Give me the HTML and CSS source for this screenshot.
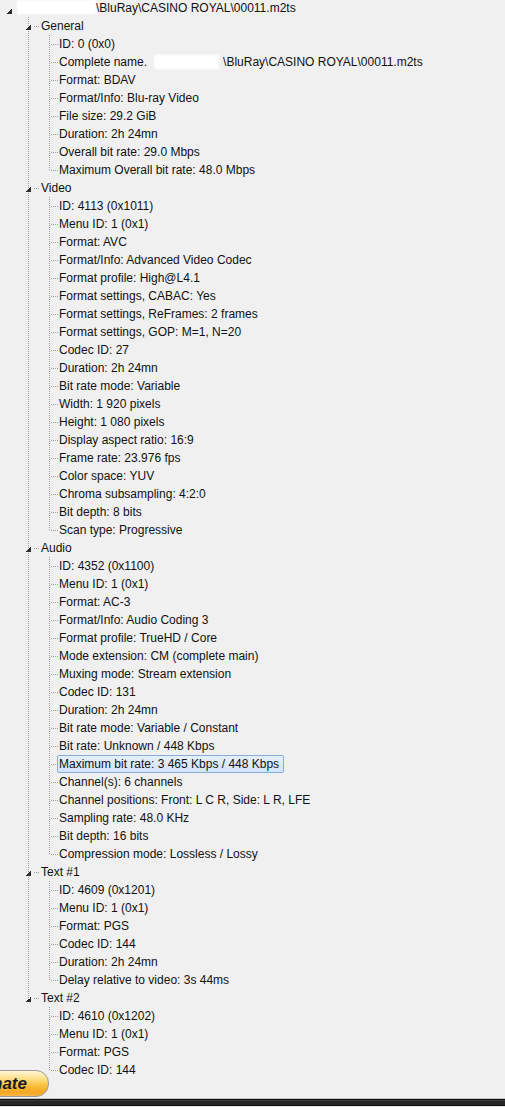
FILE: index.html
```html
<!DOCTYPE html>
<html>
<head>
<meta charset="utf-8">
<link rel="stylesheet" href="styles.css">
</head>
<body>
<div class="page">
  <div class="tree">
    <div class="row root-row"><span class="exp"></span><span class="label"><span class="redact r-root"></span>\BluRay\CASINO ROYAL\00011.m2ts</span></div>
    <ul class="groups">
      <li class="group">
        <div class="row group-row"><span class="exp"></span><span class="label">General</span></div>
        <ul class="items">
          <li class="item"><span class="label">ID: 0 (0x0)</span></li>
          <li class="item"><span class="label">Complete name.<span class="redact r-name"></span>\BluRay\CASINO ROYAL\00011.m2ts</span></li>
          <li class="item"><span class="label">Format: BDAV</span></li>
          <li class="item"><span class="label">Format/Info: Blu-ray Video</span></li>
          <li class="item"><span class="label">File size: 29.2 GiB</span></li>
          <li class="item"><span class="label">Duration: 2h 24mn</span></li>
          <li class="item"><span class="label">Overall bit rate: 29.0 Mbps</span></li>
          <li class="item"><span class="label">Maximum Overall bit rate: 48.0 Mbps</span></li>
        </ul>
      </li>
      <li class="group">
        <div class="row group-row"><span class="exp"></span><span class="label">Video</span></div>
        <ul class="items">
          <li class="item"><span class="label">ID: 4113 (0x1011)</span></li>
          <li class="item"><span class="label">Menu ID: 1 (0x1)</span></li>
          <li class="item"><span class="label">Format: AVC</span></li>
          <li class="item"><span class="label">Format/Info: Advanced Video Codec</span></li>
          <li class="item"><span class="label">Format profile: High@L4.1</span></li>
          <li class="item"><span class="label">Format settings, CABAC: Yes</span></li>
          <li class="item"><span class="label">Format settings, ReFrames: 2 frames</span></li>
          <li class="item"><span class="label">Format settings, GOP: M=1, N=20</span></li>
          <li class="item"><span class="label">Codec ID: 27</span></li>
          <li class="item"><span class="label">Duration: 2h 24mn</span></li>
          <li class="item"><span class="label">Bit rate mode: Variable</span></li>
          <li class="item"><span class="label">Width: 1 920 pixels</span></li>
          <li class="item"><span class="label">Height: 1 080 pixels</span></li>
          <li class="item"><span class="label">Display aspect ratio: 16:9</span></li>
          <li class="item"><span class="label">Frame rate: 23.976 fps</span></li>
          <li class="item"><span class="label">Color space: YUV</span></li>
          <li class="item"><span class="label">Chroma subsampling: 4:2:0</span></li>
          <li class="item"><span class="label">Bit depth: 8 bits</span></li>
          <li class="item"><span class="label">Scan type: Progressive</span></li>
        </ul>
      </li>
      <li class="group">
        <div class="row group-row"><span class="exp"></span><span class="label">Audio</span></div>
        <ul class="items">
          <li class="item"><span class="label">ID: 4352 (0x1100)</span></li>
          <li class="item"><span class="label">Menu ID: 1 (0x1)</span></li>
          <li class="item"><span class="label">Format: AC-3</span></li>
          <li class="item"><span class="label">Format/Info: Audio Coding 3</span></li>
          <li class="item"><span class="label">Format profile: TrueHD / Core</span></li>
          <li class="item"><span class="label">Mode extension: CM (complete main)</span></li>
          <li class="item"><span class="label">Muxing mode: Stream extension</span></li>
          <li class="item"><span class="label">Codec ID: 131</span></li>
          <li class="item"><span class="label">Duration: 2h 24mn</span></li>
          <li class="item"><span class="label">Bit rate mode: Variable / Constant</span></li>
          <li class="item"><span class="label">Bit rate: Unknown / 448 Kbps</span></li>
          <li class="item"><span class="label selected">Maximum bit rate: 3 465 Kbps / 448 Kbps</span></li>
          <li class="item"><span class="label">Channel(s): 6 channels</span></li>
          <li class="item"><span class="label">Channel positions: Front: L C R, Side: L R, LFE</span></li>
          <li class="item"><span class="label">Sampling rate: 48.0 KHz</span></li>
          <li class="item"><span class="label">Bit depth: 16 bits</span></li>
          <li class="item"><span class="label">Compression mode: Lossless / Lossy</span></li>
        </ul>
      </li>
      <li class="group">
        <div class="row group-row"><span class="exp"></span><span class="label">Text #1</span></div>
        <ul class="items">
          <li class="item"><span class="label">ID: 4609 (0x1201)</span></li>
          <li class="item"><span class="label">Menu ID: 1 (0x1)</span></li>
          <li class="item"><span class="label">Format: PGS</span></li>
          <li class="item"><span class="label">Codec ID: 144</span></li>
          <li class="item"><span class="label">Duration: 2h 24mn</span></li>
          <li class="item"><span class="label">Delay relative to video: 3s 44ms</span></li>
        </ul>
      </li>
      <li class="group">
        <div class="row group-row"><span class="exp"></span><span class="label">Text #2</span></div>
        <ul class="items">
          <li class="item"><span class="label">ID: 4610 (0x1202)</span></li>
          <li class="item"><span class="label">Menu ID: 1 (0x1)</span></li>
          <li class="item"><span class="label">Format: PGS</span></li>
          <li class="item"><span class="label">Codec ID: 144</span></li>
        </ul>
      </li>
    </ul>
  </div>
  <div class="taskbar"></div>
  <div class="donate">nate</div>
</div>
</body>
</html>
```

FILE: styles.css
```css
html, body {
  margin: 0;
  padding: 0;
}
body {
  background: #f0f0f0;
  font-family: "Liberation Sans", Arial, sans-serif;
  font-size: 12px;
  color: #111;
  overflow: hidden;
}
.page {
  position: relative;
  height: 1107px;
  display: flex;
  flex-direction: column;
}
.tree {
  flex: 1;
  margin-top: -1px;
}
ul {
  list-style: none;
  margin: 0;
  padding: 0;
}
.row {
  position: relative;
  height: 18px;
  display: flex;
  align-items: center;
  white-space: nowrap;
}
.label {
  display: inline-block;
  line-height: 16px;
  white-space: nowrap;
}
.exp {
  width: 5px;
  height: 5px;
  background: linear-gradient(135deg, transparent 50%, #2b2b2b 50%);
  flex: none;
}
.root-row {
  padding-left: 7px;
}
.root-row .exp {
  margin-top: 7px;
  margin-right: 6px;
}
.redact {
  display: inline-block;
  vertical-align: middle;
  background: #fff;
  box-shadow: 0 0 2px 1px #fff;
  height: 12px;
}
.r-root {
  width: 77px;
  margin-right: 1px;
  margin-top: -4px;
}
.r-name {
  width: 63px;
  margin: -2px 5px 0 8px;
}
.group {
  position: relative;
}
.group::before {
  content: "";
  position: absolute;
  left: 28px;
  top: 0;
  bottom: 0;
  width: 1px;
  background: repeating-linear-gradient(to bottom, #9d9d9d 0 1px, transparent 1px 2px);
}
.group:last-child::before {
  bottom: auto;
  height: 9px;
}
.group-row {
  padding-left: 26px;
}
.group-row .exp {
  position: relative;
  z-index: 1;
  margin-top: 3px;
  margin-right: 10px;
}
.group-row::after {
  content: "";
  position: absolute;
  left: 33px;
  top: 9px;
  width: 7px;
  height: 1px;
  background: repeating-linear-gradient(to right, transparent 0 1px, #9d9d9d 1px 2px);
}
.item {
  position: relative;
  height: 18px;
  padding-left: 59px;
  display: flex;
  align-items: center;
  white-space: nowrap;
}
.item::before {
  content: "";
  position: absolute;
  left: 49px;
  top: 0;
  bottom: 0;
  width: 1px;
  background: repeating-linear-gradient(to bottom, #9d9d9d 0 1px, transparent 1px 2px);
}
.item:last-child::before {
  bottom: auto;
  height: 10px;
}
.item::after {
  content: "";
  position: absolute;
  left: 50px;
  top: 9px;
  width: 8px;
  height: 1px;
  background: repeating-linear-gradient(to right, transparent 0 1px, #9d9d9d 1px 2px);
}
.selected {
  margin-left: -2px;
  padding: 0 4px 0 1px;
  border: 1px solid #84acdd;
  border-radius: 2px;
  background: linear-gradient(to bottom, #e6f0fc, #d3e4fa);
}
.taskbar {
  height: 9px;
  flex: none;
  background: linear-gradient(to bottom, #c4c4c4 0 1px, #111 1px 2px, #3a3d3a 2px 3px, #262826 3px 7px, #0c0c0c 7px 8px, #e8e8e8 8px 9px),
              #262826;
}
.donate {
  position: absolute;
  left: -40px;
  top: 1070px;
  width: 89px;
  height: 27px;
  border: 1px solid #9a9a9a;
  border-radius: 0 13px 13px 0;
  background: linear-gradient(to bottom, #fff6d6 0%, #fde08a 30%, #f9c443 55%, #f5a623 85%, #f7b84a 100%);
  font-family: "Liberation Sans", Arial, sans-serif;
  font-weight: bold;
  font-style: italic;
  font-size: 17px;
  color: #1c1c24;
  line-height: 25px;
  text-align: right;
  padding-right: 21px;
  box-sizing: border-box;
}
```
